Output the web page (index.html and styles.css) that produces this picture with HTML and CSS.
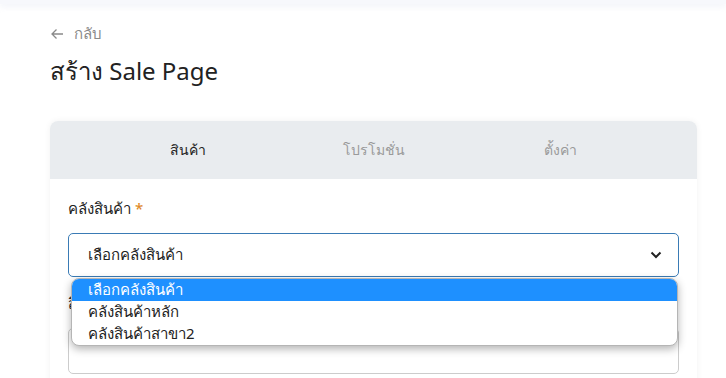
FILE: index.html
```
<html>
<head>
  <link rel="stylesheet" href="styles.css">
</head>
<body>
  <div class="topbar"></div>

  <div class="page">
    <a class="back" href="#">
      <svg width="14" height="14" viewBox="0 0 14 14"><path d="M13 7H2M6.5 2.5L2 7l4.5 4.5" fill="none" stroke="#8a8a8a" stroke-width="1.3"/></svg>
      <span>กลับ</span>
    </a>
    <h1 class="title">สร้าง Sale Page</h1>

    <div class="card">
      <div class="tabs">
        <div class="tab active">สินค้า</div>
        <div class="tab">โปรโมชั่น</div>
        <div class="tab">ตั้งค่า</div>
      </div>

      <div class="card-body">
        <div class="field">
          <label class="label">คลังสินค้า <span class="req">*</span></label>
          <div class="select-wrap">
            <div class="select">
              <span>เลือกคลังสินค้า</span>
              <svg width="12" height="8" viewBox="0 0 12 8"><path d="M1.5 1.5L6 6l4.5-4.5" fill="none" stroke="#222" stroke-width="2"/></svg>
            </div>
            <ul class="options">
              <li class="selected">เลือกคลังสินค้า</li>
              <li>คลังสินค้าหลัก</li>
              <li>คลังสินค้าสาขา2</li>
            </ul>
          </div>
        </div>

        <div class="field">
          <label class="label">สินค้า</label>
          <div class="input"></div>
        </div>
      </div>
    </div>
  </div>
</body>
</html>
```

FILE: styles.css
```
body {
  margin: 0;
  font-family: "Noto Sans", "Liberation Sans", sans-serif;
  background-color: #ffffff;
  color: #222222;
  overflow: hidden;
}

.topbar {
  height: 4px;
  background-color: #f7f8fc;
  box-shadow: 0 2px 6px rgba(200, 205, 230, 0.35);
}

.page {
  padding: 20px 29px 0 50px;
}

.back {
  display: flex;
  align-items: center;
  gap: 10px;
  color: #8a8a8a;
  font-size: 15px;
  text-decoration: none;
  height: 20px;
}

.title {
  margin: 11px 0 0;
  font-size: 24px;
  font-weight: 400;
  line-height: 32px;
  color: #222222;
}

.card {
  margin-top: 34px;
  border-radius: 8px;
  background-color: #ffffff;
  box-shadow: 0 0 6px rgba(0, 0, 0, 0.06);
  overflow: hidden;
}

.tabs {
  display: flex;
  height: 58px;
  padding: 0 44px 0 45px;
  background-color: #e9ecef;
}

.tab {
  flex: 1;
  display: flex;
  align-items: center;
  justify-content: center;
  font-size: 14px;
  color: #9a9a9a;
}

.tab.active {
  color: #222222;
  font-weight: 500;
}

.card-body {
  padding: 17px 18px 20px;
}

.field {
  margin-bottom: 14px;
}

.label {
  display: block;
  font-size: 15px;
  font-weight: 500;
  line-height: 24px;
  margin-bottom: 13px;
}

.req {
  color: #e08a2a;
}

.select-wrap {
  position: relative;
}

.select {
  display: flex;
  align-items: center;
  justify-content: space-between;
  height: 42px;
  padding: 0 16px 0 19px;
  border: 1px solid #3a7bb5;
  border-radius: 5px;
  font-size: 15px;
}

.options {
  position: absolute;
  top: 45px;
  left: 3px;
  right: 1px;
  margin: 0;
  padding: 0;
  list-style: none;
  background-color: #ffffff;
  border: 1px solid #b5b5b5;
  border-radius: 8px;
  box-shadow: 0 3px 8px rgba(0, 0, 0, 0.3);
  overflow: hidden;
  font-size: 15px;
  z-index: 2;
}

.options li {
  height: 22px;
  line-height: 21px;
  padding-left: 16px;
}

.options li.selected {
  background-color: #1e90ff;
  color: #ffffff;
}

.input {
  height: 44px;
  border: 1px solid #cccccc;
  border-radius: 5px;
}
```
